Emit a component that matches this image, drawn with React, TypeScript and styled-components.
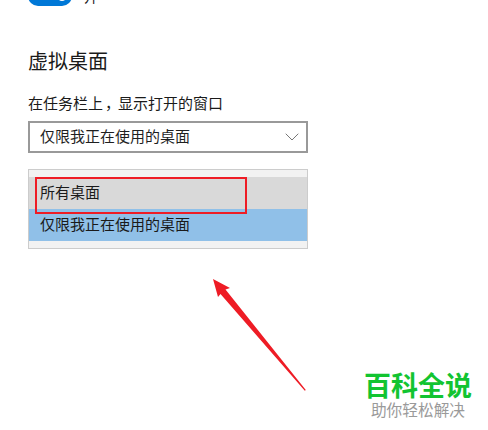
import React from 'react'
import styled, { createGlobalStyle } from 'styled-components'
import { ChevronDown } from 'lucide-react'

const GlobalStyle = createGlobalStyle`
  html, body {
    margin: 0;
    padding: 0;
    background: #fff;
  }
`

const Page = styled.div`
  position: relative;
  width: 488px;
  height: 430px;
  overflow: hidden;
  padding-left: 28px;
  box-sizing: border-box;
  background: #fff;
  color: #1a1a1a;
  font-family: "Noto Sans CJK SC", "Liberation Sans", sans-serif;
`

const ToggleRow = styled.div`
  display: flex;
  align-items: center;
  gap: 12px;
  margin-top: -14px;
  height: 20px;
`

const ToggleTrack = styled.div`
  position: relative;
  width: 44px;
  height: 20px;
  border-radius: 10px;
  background: #0078d7;
`

const ToggleKnob = styled.div`
  position: absolute;
  right: 5px;
  top: 5px;
  width: 10px;
  height: 10px;
  border-radius: 50%;
  background: #fff;
`

const ToggleText = styled.span`
  font-size: 14px;
  line-height: 20px;
`

const Heading = styled.h2`
  margin: 41px 0 0;
  font-size: 20px;
  line-height: 28px;
  font-weight: 400;
`

const FieldLabel = styled.div`
  margin-top: 18px;
  font-size: 15px;
  line-height: 20px;
  white-space: nowrap;
`

const Comma = styled.span`
  display: inline-block;
  box-sizing: border-box;
  width: 15px;
  padding-left: 2px;
  overflow: visible;
`

const SelectBox = styled.div`
  display: flex;
  align-items: center;
  justify-content: space-between;
  box-sizing: border-box;
  width: 280px;
  height: 32px;
  margin-top: 8px;
  padding: 0 2px 0 10px;
  border: 2px solid #999;
  font-size: 15px;
  color: #1f1f1f;

  svg {
    color: #777;
  }
`

const SelectText = styled.span`
  padding-bottom: 3px;
`

const OptionList = styled.div`
  box-sizing: border-box;
  width: 280px;
  height: 80px;
  margin-top: 16px;
  padding: 7px 0;
  border: 1px solid #ccc;
  background: #f2f2f2;
`

const Option = styled.div<{ $tone: string }>`
  display: flex;
  align-items: center;
  box-sizing: border-box;
  height: 32px;
  padding: 0 0 4px 11px;
  font-size: 15px;
  color: #1a1a1a;
  background: ${p => p.$tone};
`

const Highlight = styled.div`
  position: absolute;
  left: 35px;
  top: 177px;
  width: 212px;
  height: 37px;
  box-sizing: border-box;
  border: 2px solid #ee1c25;
`

const Arrow = styled.svg`
  position: absolute;
  left: 205px;
  top: 270px;
`

const Watermark = styled.div`
  position: absolute;
  left: 364px;
  top: 369px;
  display: flex;
  flex-direction: column;
  align-items: center;
  width: 108px;
`

const BrandName = styled.div`
  font-size: 27px;
  line-height: 32px;
  font-weight: 700;
  color: #12c431;
  white-space: nowrap;
`

const BrandSlogan = styled.div`
  font-size: 15.7px;
  line-height: 17px;
  color: #9a9a9a;
  white-space: nowrap;
`

export default function App() {
  return (
    <Page>
      <GlobalStyle />
      <ToggleRow>
        <ToggleTrack>
          <ToggleKnob />
        </ToggleTrack>
        <ToggleText>开</ToggleText>
      </ToggleRow>
      <Heading>虚拟桌面</Heading>
      <FieldLabel>
        在任务栏上<Comma>，</Comma>显示打开的窗口
      </FieldLabel>
      <SelectBox>
        <SelectText>仅限我正在使用的桌面</SelectText>
        <ChevronDown size={24} strokeWidth={1} />
      </SelectBox>
      <OptionList>
        <Option $tone="#d9d9d9">所有桌面</Option>
        <Option $tone="#90c0e8">仅限我正在使用的桌面</Option>
      </OptionList>
      <Highlight />
      <Arrow width="110" height="125" viewBox="0 0 110 125">
        <path
          d="M8 9 L25 18 L20.5 19.5 L100.8 120 L99.8 120.8 L15.5 24 L13 27 Z"
          fill="#ee1c25"
        />
      </Arrow>
      <Watermark>
        <BrandName>百科全说</BrandName>
        <BrandSlogan>助你轻松解决</BrandSlogan>
      </Watermark>
    </Page>
  )
}
